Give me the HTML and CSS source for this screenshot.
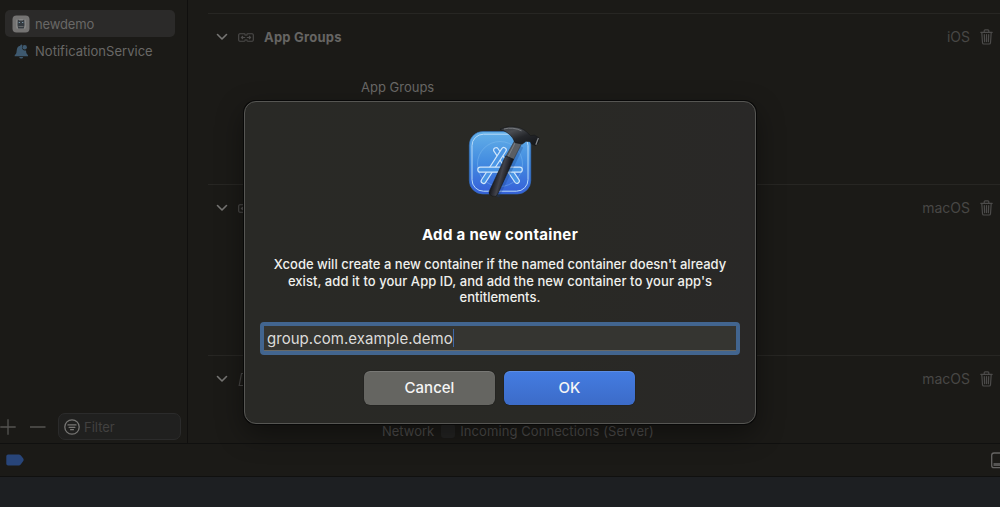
FILE: index.html
```html
<!DOCTYPE html>
<html lang="en">
<head>
<meta charset="utf-8">
<title>App Groups</title>
<link rel="stylesheet" href="styles.css">
</head>
<body>
<svg class="defs" width="0" height="0" aria-hidden="true">
  <symbol id="chevron" viewBox="0 0 12 8"><path d="M1.500 1.500 6 6l4.500-4.500" fill="none" stroke="#777674" stroke-width="1.600" stroke-linecap="round" stroke-linejoin="round"/></symbol>
  <symbol id="link" viewBox="0 0 16 9"><g fill="none" stroke="#4d4c4b" stroke-width="1.100"><path d="M7.200 2.800V1.700Q7.200.8 6.200.8H1.800Q.7.800.7 1.900v5.200q0 1.100 1.100 1.100h4.400q1 0 1-.9V6.200M8.800 2.800V1.700q0-.9 1-.9h4.400q1.100 0 1.100 1.100v5.200q0 1.100-1.100 1.100H9.800q-1 0-1-.9V6.200M3.400 4.500h3.800M8.800 4.500h3.800M5 3 3.400 4.500 5 6M11 3l1.600 1.500L11 6"/></g></symbol>
  <symbol id="trash" viewBox="0 0 13 16"><g fill="none" stroke="#4c4b4a" stroke-width="1.200" stroke-linecap="round" stroke-linejoin="round"><path d="M.8 3.300h11.400M4.200 3V1.700q0-.9.900-.9h2.800q.9 0 .9.900V3M1.800 3.500l.7 10.200q.1 1.300 1.300 1.300h5.400q1.200 0 1.300-1.300l.7-10.200M4.300 5.600l.3 7M6.500 5.600v7M8.700 5.600l-.3 7"/></g></symbol>
</svg>
<div class="window">
  <div class="workspace">
    <aside class="sidebar">
      <div class="target selected">
        <svg class="target-icon" width="18" height="18" viewBox="0 0 18 18"><rect x=".5" y=".5" width="17" height="17" rx="4" fill="#747372"/><rect x="4" y="4" width="10" height="10" rx="2" fill="#858584"/><path d="M5.800 4.300 7.300 5.500h3.400l1.500-1.200.3 5.700-.7 3.500H6.200L5.500 10z" fill="#353b40"/><path d="M6.700 7.500h1.300M10 7.500h1.300" stroke="#7994a6"/><path d="M6.500 11.500h5" stroke="#646668"/></svg>
        <span class="t-new">newdemo</span>
      </div>
      <div class="target">
        <svg class="target-icon" width="18" height="18" viewBox="0 0 18 18"><path d="M2.600 14.300q-.3-1 1.200-2.300.7-.7.900-3.600.2-3.800 3.500-4.600.1-1 1-1.200.8 0 1.300.9a3.200 3.200 0 0 0 3.500 4.900q.1 2.800 1 3.600 1.400 1.300 1.100 2.300z" fill="#3e596f"/><circle cx="12.700" cy="5.300" r="2.200" fill="#3e596f"/><path d="M7.200 15.100h4q-.3 1.500-2 1.500t-2-1.500" fill="#3e596f"/></svg>
        <span class="t-service">NotificationService</span>
      </div>
      <div class="sidebar-tools">
        <svg class="plus-minus" width="48" height="18" viewBox="0 0 48 18"><path d="M.3 9h15.400M8 1.300v15.400M30 9h15.500" stroke="#555452" stroke-width="1.300"/></svg>
        <div class="filter">
          <svg width="16" height="16" viewBox="0 0 16 16"><g fill="none" stroke="#777674" stroke-width="1.300" stroke-linecap="round"><circle cx="8" cy="8" r="7.200"/><path d="M4 5.900h8M5.100 8.300h5.800M6.600 10.700h2.800"/></g></svg>
          <span>Filter</span>
        </div>
      </div>
    </aside>
    <main class="editor">
      <section class="capability">
        <header>
          <svg class="chevron"><use href="#chevron"/></svg><svg class="link"><use href="#link"/></svg>
          <h2>App Groups</h2><span class="platform">iOS</span><svg class="trash"><use href="#trash"/></svg>
        </header>
        <p class="field-label"><span>App Groups</span></p>
      </section>
      <section class="capability">
        <header>
          <svg class="chevron"><use href="#chevron"/></svg><svg class="link"><use href="#link"/></svg>
          <span class="platform">macOS</span><svg class="trash"><use href="#trash"/></svg>
        </header>
      </section>
      <section class="capability sandbox">
        <header>
          <svg class="chevron"><use href="#chevron"/></svg>
          <svg class="link" viewBox="0 0 16 15"><path d="M3.500 1.500h9l2 12H1.200z" fill="none" stroke="#454443" stroke-width="1.200"/></svg>
          <span class="platform">macOS</span><svg class="trash"><use href="#trash"/></svg>
        </header>
        <div class="network"><span class="n-label">Network</span><i class="checkbox"></i><span class="n-text">Incoming Connections (Server)</span></div>
      </section>
    </main>
  </div>
  <div class="debug-bar">
    <svg width="18" height="12" viewBox="0 0 18 12"><path d="M2 .5h10.700q1.300 0 2.200 1l2.200 2.800q1.100 1.500 0 3l-2.200 3q-.9 1.200-2.200 1.200H2Q.3 11.500.3 9.800V2.200Q.3.500 2 .5" fill="#284579"/></svg>
    <svg width="9" height="17" viewBox="0 0 9 17"><path d="M10 1H3Q.7 1 .7 3.300v10.200q0 2.200 2.300 2.200h7" fill="none" stroke="#656463" stroke-width="1.300"/><path d="M2.500 11H10v3H2.500z" fill="#555453"/></svg>
  </div>
  <div class="console"></div>
</div>
<div class="dialog" role="dialog">
  <svg class="app-icon" width="76" height="76" viewBox="0 0 76 76">
    <defs>
      <linearGradient id="blue" x2="0" y2="1"><stop stop-color="#64b0e8"/><stop offset=".5" stop-color="#428be0"/><stop offset="1" stop-color="#365fd8"/></linearGradient>
      <linearGradient id="steel" x2=".8" y2="1"><stop stop-color="#34373b"/><stop offset=".3" stop-color="#4a4d52"/><stop offset=".6" stop-color="#25272b"/><stop offset="1" stop-color="#15171a"/></linearGradient>
      <linearGradient id="grip" x1=".25" y1=".4" x2=".7" y2=".6"><stop stop-color="#18191e"/><stop offset=".5" stop-color="#42434b"/><stop offset="1" stop-color="#17181d"/></linearGradient>
    </defs>
    <rect x="7.300" y="8.500" width="61.500" height="62.500" rx="13.500" fill="url(#blue)" stroke="#316dbb" stroke-width=".6"/>
    <rect x="10" y="11.200" width="56" height="57" rx="11.500" fill="none" stroke="#b5d9f8" stroke-width="1"/>
    <circle cx="38" cy="41" r="22.500" fill="none" stroke="#8ac2f2" stroke-width=".8" opacity=".5"/>
    <g fill="#4b96e5" stroke="#cfe6fb" stroke-width="1.200">
      <rect x="-2.400" y="-21" width="4.800" height="42" rx="2.400" transform="translate(44.500 42.500) rotate(-34)"/>
      <rect x="-2.400" y="-21" width="4.800" height="42" rx="2.400" transform="translate(31.700 42.500) rotate(33)"/>
      <rect x="15.800" y="44.200" width="44.500" height="5" rx="2.500"/>
    </g>
    <path d="M58 23 34 73" stroke="#173e7e" stroke-width="7" opacity=".28"/>
    <path d="m53 17 6.700 3.500-8 16-7.800-3.200z" fill="#5a5e63" stroke="#292b30" stroke-width=".5"/>
    <path d="m53.500 19-7.300 14.600" stroke="#858a90" stroke-width=".8"/>
    <path d="m43.700 33 8 3.300-16.200 35.200q-1.500 2.800-5.200 1.600-4.100-1.500-3.200-4.400z" fill="url(#grip)" stroke="#16171a" stroke-width=".6"/>
    <path d="M38 6.200Q44.700 2.800 52 3.900q7.700.5 12.700 5.100l4 3.700 3.600-.6L77 14.700l-.3 4.200-3 3.800-4-1.700-1.400-2.300-4.300-.4-3.700 2.700-7.300-1.300-2.300-4.700q-4-5.800-12.700-8.800" fill="url(#steel)" stroke="#15171a" stroke-width=".6"/>
    <path d="m76.400 15-2.600 6.800" stroke="#85888c" stroke-width="1.200"/>
    <path d="M42 6q9-2.400 17.500 1.800" fill="none" stroke="#777a7e" stroke-width="1"/>
  </svg>
  <h1><span>Add a new container</span></h1>
  <p class="message"><span>Xcode will create a new container if the named container doesn't already</span><br><span class="line-two">exist, add it to your App ID, and add the new container to your app's</span><br><span>entitlements.</span></p>
  <div class="input"><span>group.com.example.demo</span><i class="caret"></i></div>
  <div class="actions"><button class="cancel">Cancel</button><button class="ok">OK</button></div>
</div>
</body>
</html>
```
FILE: styles.css
```css
* { box-sizing: border-box; }
body { margin: 0; width: 1000px; height: 507px; overflow: hidden; background: #1b1a17; color: #696866; font-family: Inter, "Liberation Sans", sans-serif; font-size: 13px; }
h1, h2, p { margin: 0; }
svg { display: block; flex: none; }
.defs { position: absolute; }
.window { display: flex; flex-direction: column; height: 507px; }
.workspace { display: flex; height: 443px; }
.sidebar { display: flex; flex-direction: column; width: 188px; padding: 10px 0 0 5px; border-right: 1px solid #100f0e; }
.target { display: flex; align-items: center; gap: 5px; width: 170px; height: 27px; padding-left: 7px; border-radius: 5px; white-space: nowrap; }
.selected { background: #2b2a29; }
.t-new { letter-spacing: -.13px; }
.t-service { letter-spacing: .03px; }
.sidebar-tools { display: flex; align-items: center; gap: 10px; margin: auto 0 3px -5px; }
.filter { display: flex; align-items: center; gap: 4px; width: 123px; height: 27px; padding-left: 5px; color: #424140; border: 1px solid #2b2b2b; border-radius: 7px; background: #20201f; }
.editor { flex: 1; padding: 13px 0 0 20px; }
.capability { height: 171px; border-top: 1px solid #272623; }
.sandbox { height: 88px; }
.capability header { display: flex; align-items: center; height: 46px; padding: 0 7px 0 8px; }
.chevron { width: 12px; height: 8px; }
.link { width: 16px; height: 9px; margin: 0 10px 0 10px; }
.sandbox .link { height: 15px; }
h2 { font-size: 13px; font-weight: 700; letter-spacing: .23px; color: #666563; }
.platform { margin: -2px 0 0 auto; color: #484745; font-size: 14px; }
.trash { width: 13px; height: 16px; margin: -1px 0 0 10px; }
.field-label { margin: 19px 0 0 153px; line-height: 16px; }
.network { display: flex; align-items: center; height: 18px; margin: 20px 0 0 174px; color: #4d4c4b; }
.n-text { letter-spacing: .08px; }
.checkbox { width: 14px; height: 14px; margin: 0 5px 0 7px; border-radius: 3px; background: #242423; }
.debug-bar { display: flex; align-items: center; justify-content: space-between; height: 34px; padding-left: 6px; border-top: 1px solid #10100f; border-bottom: 1px solid #10100f; }
.console { flex: 1; background: #1d1f22; }
.dialog { position: absolute; left: 244px; top: 101px; width: 512px; height: 323px; padding: 21px 16px 0; text-align: center; color: #f0f0ed; border: 1px solid #565653; border-radius: 12px; background: linear-gradient(90deg, #292926, #292925 60%, #292827); box-shadow: 0 0 0 1px #080808, 0 10px 28px rgba(0,0,0,.42); }
.app-icon { width: 76px; height: 76px; margin: 0 auto; overflow: visible; }
h1 { margin-top: 26px; font-size: 15px; line-height: 20px; font-weight: 700; letter-spacing: .32px; color: #fff; }
.message { margin-top: 11px; line-height: 16.500px; font-size: 13px; font-weight: 500; white-space: nowrap; }
.line-two { letter-spacing: .06px; }
.input { display: flex; align-items: center; width: 480px; height: 33px; margin: 16px 0 0 -1px; padding-left: 3px; border: 4px solid #42658f; border-radius: 4px; background: #353531; color: #dcdcda; font-size: 15px; letter-spacing: .03px; box-shadow: inset 0 -1px #686966; }
.caret { width: 1px; height: 18px; background: #3d68a9; }
.actions { display: flex; justify-content: center; gap: 9px; margin: 16px 1px 0 0; }
button { width: 131px; height: 34px; padding: 0; border: 0; border-radius: 6px; color: #f5f5f5; font: 500 15px Inter, sans-serif; box-shadow: inset 0 1px rgba(255,255,255,.13), 0 0 1px #000; }
.cancel { background: #656561; }
.ok { background: linear-gradient(#447ce1, #3c6bc8); }
```
